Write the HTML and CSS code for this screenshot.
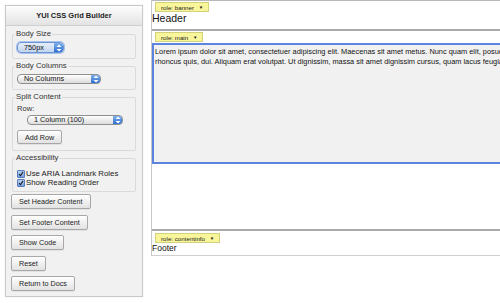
FILE: index.html
```html
<!DOCTYPE html>
<html lang="en">
<head>
    <meta charset="UTF-8">
    <title>YUI CSS Grid Builder</title>
    <link rel="stylesheet" href="styles.css">
</head>
<body>
    <div class="page">
        <div class="panel">
            <div class="panel-header">YUI CSS Grid Builder</div>
            <div class="panel-body">
                <fieldset class="group">
                    <legend>Body Size</legend>
                    <div class="select select-small focus">
                        <span class="select-text">750px</span>
                        <span class="select-arrows"><svg width="6" height="8" viewBox="0 0 6 8"><path d="M3 0.5L5.5 3H0.5Z M3 7.5L5.5 5H0.5Z" fill="#fff"/></svg></span>
                    </div>
                </fieldset>
                <fieldset class="group">
                    <legend>Body Columns</legend>
                    <div class="select select-medium">
                        <span class="select-text">No Columns</span>
                        <span class="select-arrows"><svg width="6" height="8" viewBox="0 0 6 8"><path d="M3 0.5L5.5 3H0.5Z M3 7.5L5.5 5H0.5Z" fill="#fff"/></svg></span>
                    </div>
                </fieldset>
                <fieldset class="group group-split">
                    <legend>Split Content</legend>
                    <div class="row-label">Row:</div>
                    <div class="select select-row">
                        <span class="select-text">1 Column (100)</span>
                        <span class="select-arrows"><svg width="6" height="8" viewBox="0 0 6 8"><path d="M3 0.5L5.5 3H0.5Z M3 7.5L5.5 5H0.5Z" fill="#fff"/></svg></span>
                    </div>
                    <button class="btn btn-add">Add Row</button>
                </fieldset>
                <fieldset class="group group-access">
                    <legend>Accessibility</legend>
                    <label class="check-row"><span class="check"><svg width="8" height="8" viewBox="0 0 8 8"><path d="M1.5 4.2L3.3 6.3L6.8 1.2" stroke="#1a1a1a" stroke-width="1.4" fill="none"/></svg></span>Use ARIA Landmark Roles</label>
                    <label class="check-row"><span class="check"><svg width="8" height="8" viewBox="0 0 8 8"><path d="M1.5 4.2L3.3 6.3L6.8 1.2" stroke="#1a1a1a" stroke-width="1.4" fill="none"/></svg></span>Show Reading Order</label>
                </fieldset>
                <div class="actions">
                    <button class="btn">Set Header Content</button>
                    <button class="btn">Set Footer Content</button>
                    <button class="btn">Show Code</button>
                    <button class="btn">Reset</button>
                    <button class="btn">Return to Docs</button>
                </div>
            </div>
        </div>

        <div class="grid">
            <div class="section hd">
                <span class="role-tag">role: banner <span class="caret">&#9660;</span></span>
                <div class="section-text">Header</div>
            </div>
            <div class="section bd">
                <span class="role-tag">role: main <span class="caret">&#9660;</span></span>
                <div class="main-box">
                    <p>Lorem ipsum dolor sit amet, consectetuer adipiscing elit. Maecenas sit amet metus. Nunc quam elit, posuere nec, auctor in, rhoncus quis, dui. Aliquam erat volutpat. Ut dignissim, massa sit amet dignissim cursus, quam lacus feugiat.</p>
                </div>
            </div>
            <div class="section ft">
                <span class="role-tag">role: contentinfo <span class="caret">&#9660;</span></span>
                <div class="section-text footer-text">Footer</div>
            </div>
        </div>
    </div>
</body>
</html>
```

FILE: styles.css
```css
* {
    margin: 0;
    padding: 0;
    box-sizing: border-box;
    font-family: "Liberation Sans", Arial, sans-serif;
}

body {
    background: #ffffff;
    color: #1a1a1a;
    overflow: hidden;
}

.page {
    display: flex;
    align-items: flex-start;
    width: 500px;
    height: 303px;
    overflow: hidden;
}

/* left tool panel */
.panel {
    width: 138px;
    height: 292px;
    margin: 5px 0 0 5px;
    background: #f1f1f1;
    border: 1px solid #c9c9c9;
    box-shadow: 0 0 2px rgba(0, 0, 0, 0.08);
    flex-shrink: 0;
}

.panel-header {
    height: 20px;
    line-height: 19px;
    text-align: center;
    font-size: 7.5px;
    font-weight: bold;
    color: #222;
    background: linear-gradient(#fdfdfd, #e3e3e3);
    border-bottom: 1px solid #cfcfcf;
}

.panel-body {
    padding: 3px 5px 0 5px;
}

.group {
    border: 1px solid #dadada;
    border-radius: 2px;
    margin: 0 0 2px 1px;
    padding: 3px 4px 5px 4px;
    width: 124px;
}

.group legend {
    font-size: 7.8px;
    color: #333;
    padding: 0 1px;
    margin-left: -2px;
    line-height: 10px;
}

.select {
    display: flex;
    align-items: center;
    height: 11px;
    border: 1px solid #8f8f8f;
    border-radius: 4px;
    background: linear-gradient(#ffffff, #dcdcdc);
    font-size: 7.3px;
    color: #111;
    overflow: hidden;
}

.select.focus {
    border-color: #6b93d6;
    background: linear-gradient(#e4edf9, #c3d5ef);
    box-shadow: 0 0 0 1px #a9c3ea;
}

.select-text {
    flex: 1;
    padding-left: 6px;
    line-height: 10px;
}

.select-arrows {
    width: 9px;
    height: 100%;
    display: flex;
    align-items: center;
    justify-content: center;
    background: linear-gradient(#7fb0ec, #2f6fd3);
}

.select-small {
    width: 47px;
}

.select-medium {
    width: 84px;
    height: 10px;
}

.select-row {
    width: 96px;
    height: 10px;
    margin: 1px 0 0 10px;
}

.row-label {
    font-size: 7.6px;
    color: #333;
    line-height: 10px;
}

.btn {
    display: block;
    height: 15px;
    padding: 0 7px;
    font-size: 7.2px;
    color: #222;
    background: linear-gradient(#ffffff, #e2e2e2);
    border: 1px solid #a8a8a8;
    border-radius: 2px;
    box-shadow: 0 1px 0 rgba(0, 0, 0, 0.06);
}

.btn-add {
    margin-top: 5px;
    height: 14px;
}

.group-split {
    padding-top: 2px;
    padding-bottom: 6px;
}

.group-access {
    padding-bottom: 4px;
}

.check-row {
    display: flex;
    align-items: center;
    font-size: 7.8px;
    color: #222;
    line-height: 9px;
}

.check-row:first-of-type {
    margin-top: 3px;
}

.check {
    width: 8px;
    height: 8px;
    border: 1px solid #5a7cb8;
    border-radius: 1px;
    background: linear-gradient(#b9d2f3, #6f9fe0);
    display: flex;
    align-items: center;
    justify-content: center;
    margin-right: 1px;
}

.actions {
    display: flex;
    flex-direction: column;
    align-items: flex-start;
    gap: 5.5px;
    margin-top: 1px;
}

/* right side grid preview */
.grid {
    flex: 1;
    margin-left: 8px;
    border-left: 1px solid #c8c8c8;
    border-top: 1px solid #b8b8b8;
    min-width: 0;
    overflow: hidden;
}

.section {
    display: flex;
    flex-direction: column;
    align-items: flex-start;
}

.hd {
    height: 28px;
    padding-top: 1px;
}

.bd {
    height: 200px;
    border-top: 2px solid #a9a9a9;
    padding-top: 1px;
}

.ft {
    height: 27px;
    border-top: 2px solid #a9a9a9;
    border-bottom: 1px solid #cfcfcf;
    padding-top: 2px;
}

.role-tag {
    display: block;
    margin-left: 3px;
    height: 10px;
    line-height: 9px;
    padding: 0 5px 0 5px;
    font-size: 6.2px;
    color: #222;
    background: #f8f59b;
    border: 1px solid #d4d17c;
    white-space: nowrap;
}

.caret {
    font-size: 4.5px;
    margin-left: 3px;
    vertical-align: 1px;
}

.section-text {
    font-size: 10.5px;
    line-height: 12px;
    color: #111;
}

.footer-text {
    font-size: 8.5px;
    line-height: 11px;
}

.main-box {
    margin-top: 1px;
    height: 121px;
    width: 600px;
    background: #f1f1f1;
    border: 2px solid #5b84e0;
    padding: 2px 0 0 1px;
}

.main-box p {
    font-size: 7.4px;
    line-height: 10px;
    color: #111;
    width: 418px;
}
```
